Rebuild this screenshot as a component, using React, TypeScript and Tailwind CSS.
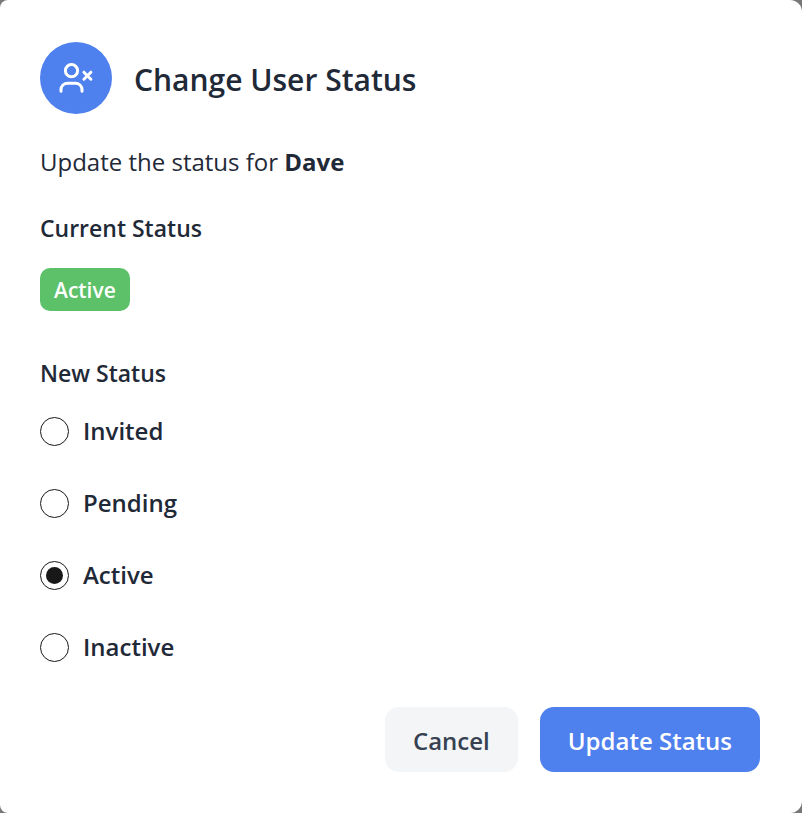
import React, { useState } from 'react';

const STATUSES = ['Invited', 'Pending', 'Active', 'Inactive'];

function UserXIcon() {
  return (
    <svg
      className="size-9"
      viewBox="0 0 36 36"
      fill="none"
      stroke="currentColor"
      strokeWidth="3"
      strokeLinecap="round"
      strokeLinejoin="round"
      aria-hidden="true"
    >
      <circle cx="13.5" cy="10.7" r="6.1" />
      <path d="M3 31.2V29.5a6.5 6.5 0 0 1 6.5-6.3h8a6.5 6.5 0 0 1 6.5 6.3v1.7" />
      <path d="m25.9 12.2 7 7m0-7-7 7" />
    </svg>
  );
}

export default function App() {
  const [status, setStatus] = useState('Active');

  return (
    <div className="min-h-screen bg-[#777777]">
      <main
        role="dialog"
        aria-labelledby="dialog-title"
        className="flex min-h-screen w-full flex-col rounded-tl-lg rounded-tr-xl rounded-br-xl rounded-bl-lg bg-white pt-[42px] pr-[42px] pb-[41px] pl-10 font-['Open_Sans','Noto_Sans',sans-serif] text-2xl text-[#1f2937]"
      >
        <header className="flex items-center gap-[22px]">
          <div className="flex size-[72px] items-center justify-center rounded-full bg-[#4e80ee] text-white">
            <UserXIcon />
          </div>
          <h1 id="dialog-title" className="pt-1 text-[30px] leading-10 font-semibold">Change User Status</h1>
        </header>

        <p className="mt-8 leading-8">
          Update the status for <strong className="font-bold">Dave</strong>
        </p>

        <section className="mt-[34px]">
          <h2 className="text-[23px] leading-8 font-semibold">Current Status</h2>
          <span className="mt-6 flex h-[43px] w-fit items-center rounded-[10px] bg-[#5cc169] px-[14px] text-[21px] font-semibold text-white">
            Active
          </span>
        </section>

        <fieldset className="mt-[46px]">
          <legend className="text-[23px] leading-8 font-semibold">New Status</legend>
          <div className="mt-[26px] flex flex-col gap-10">
            {STATUSES.map((name) => (
              <label key={name} className="flex items-center gap-[14px] leading-8 font-semibold">
                <input
                  type="radio"
                  name="status"
                  value={name}
                  checked={status === name}
                  onChange={() => setStatus(name)}
                  className="size-[29px] appearance-none rounded-full border border-[#181818] bg-white bg-clip-content p-[5px] checked:bg-[#181818]"
                />
                {name}
              </label>
            ))}
          </div>
        </fieldset>

        <footer className="mt-auto flex justify-end gap-[22px] pt-7">
          <button type="button" className="h-[65px] rounded-[14px] bg-[#f3f5f7] px-7 pt-0.5 font-semibold text-[#374151]">
            Cancel
          </button>
          <button type="button" className="h-[65px] rounded-[14px] bg-[#4e80ee] px-7 pt-0.5 font-semibold text-white">
            Update Status
          </button>
        </footer>
      </main>
    </div>
  );
}
